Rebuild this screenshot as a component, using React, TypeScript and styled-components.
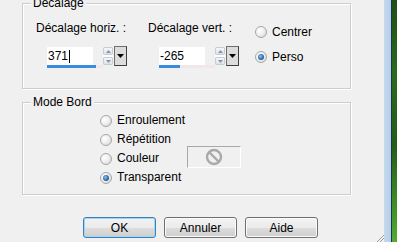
import React from "react";
import styled, { createGlobalStyle } from "styled-components";

const GlobalStyle = createGlobalStyle`
  html, body {
    margin: 0;
    padding: 0;
    background: #f0f0f0;
  }
  body {
    font-family: "Liberation Sans", Arial, sans-serif;
    font-size: 12px;
    color: #000;
  }
`;

const Screen = styled.div`
  display: flex;
  width: 397px;
  height: 242px;
  overflow: hidden;
`;

const Dialog = styled.div`
  position: relative;
  width: 384px;
  flex: none;
  display: flex;
  flex-direction: column;
  padding: 3px 33px 0 22px;
  box-sizing: border-box;
  background: #f0f0f0;
`;

const FrameEdge = styled.div`
  width: 7px;
  flex: none;
  background: linear-gradient(90deg, #c6daee, #b4cde8);
`;

const FrameLine = styled.div`
  width: 1px;
  flex: none;
  background: #1b3550;
`;

const Backdrop = styled.div`
  flex: 1;
  background: linear-gradient(180deg, #1f4f17 0%, #2b6a1d 30%, #265c18 60%, #3f8f25 85%, #55ab33 100%);
`;

const Group = styled.div<{ $h: number }>`
  position: relative;
  height: ${(p) => p.$h}px;
  box-sizing: border-box;
  border: 1px solid #cdcdcd;
  box-shadow: inset 1px 1px 0 #ffffff, 1px 1px 0 #ffffff;
`;

const Legend = styled.span`
  position: absolute;
  top: -8px;
  left: 8px;
  padding: 0 2px;
  line-height: 14px;
  background: #f0f0f0;
`;

const OffsetRow = styled.div`
  display: flex;
  padding: 17px 0 0 13px;
`;

const Field = styled.div<{ $w: number }>`
  width: ${(p) => p.$w}px;
  display: flex;
  flex-direction: column;
`;

const Label = styled.div`
  line-height: 14px;
  white-space: nowrap;
`;

const Spinner = styled.div`
  display: flex;
  align-items: flex-start;
  margin: 11px 0 0 11px;
`;

const EditColumn = styled.div`
  display: flex;
  flex-direction: column;
`;

const Edit = styled.div`
  width: 46px;
  height: 18px;
  margin-top: 1px;
  box-sizing: border-box;
  background: #fff;
  padding-left: 1px;
  line-height: 18px;
  display: flex;
  align-items: center;
`;

const Caret = styled.span`
  width: 1px;
  height: 13px;
  margin-left: 1px;
  background: #000;
`;

const Track = styled.div`
  width: 56px;
  height: 3px;
  background: #f3e6e6;
`;

const Fill = styled.div`
  height: 100%;
  background: #3b8ae0;
`;

const SpinButtons = styled.div`
  width: 10px;
  height: 18px;
  margin-top: 1px;
  display: flex;
  flex-direction: column;
  justify-content: space-between;
  background: #fff;
`;

const SpinHalf = styled.div`
  height: 8px;
  display: flex;
  align-items: center;
  justify-content: center;
  background: linear-gradient(180deg, #f4f6fa, #dde2ea);
  border: 1px solid #c8ccd6;
  box-sizing: border-box;
  border-radius: 1px;
`;

const Drop = styled.div`
  width: 13px;
  height: 20px;
  margin-left: 1px;
  box-sizing: border-box;
  border: 1px solid #6f6f6f;
  border-right-color: #3f3f3f;
  border-bottom-color: #3f3f3f;
  background: #dcdcdc;
  display: flex;
  align-items: center;
  justify-content: center;
`;

const RadioColumn = styled.div`
  display: flex;
  flex-direction: column;
  gap: 11px;
  padding-top: 4px;
`;

const RadioRow = styled.label`
  display: flex;
  align-items: center;
  gap: 5px;
  height: 14px;
  line-height: 14px;
  white-space: nowrap;
`;

const RadioDot = styled.span<{ $on?: boolean }>`
  position: relative;
  width: 12px;
  height: 12px;
  flex: none;
  box-sizing: border-box;
  border-radius: 50%;
  border: 1px solid #a7a7a7;
  background: radial-gradient(circle at 35% 35%, #ffffff 0%, #f0f0f0 45%, #cfcfcf 100%);

  &::after {
    content: "";
    display: ${(p) => (p.$on ? "block" : "none")};
    position: absolute;
    left: 2px;
    top: 2px;
    width: 6px;
    height: 6px;
    border-radius: 50%;
    background: radial-gradient(circle at 40% 40%, #8ec3f0 0%, #2c6fae 55%, #143f6a 100%);
  }
`;

const ModeRow = styled.div`
  display: flex;
  padding: 8px 0 0 77px;
`;

const ModeList = styled.div`
  width: 87px;
  display: flex;
  flex-direction: column;
`;

const ModeItem = styled(RadioRow)`
  height: 19px;
  line-height: 19px;
`;

const ColorWell = styled.div`
  width: 54px;
  height: 22px;
  margin-top: 35px;
  box-sizing: border-box;
  border: 1px solid #a8a8a8;
  border-right-color: #ffffff;
  border-bottom-color: #ffffff;
  display: flex;
  align-items: center;
  justify-content: center;
`;

const Buttons = styled.div`
  display: flex;
  gap: 8px;
  margin: 22px 0 0 61px;
`;

const Button = styled.button<{ $focus?: boolean }>`
  width: 73px;
  height: 21px;
  padding: 0;
  font-family: "Liberation Sans", Arial, sans-serif;
  font-size: 12px;
  color: #000;
  border-radius: 3px;
  border: 1px solid ${(p) => (p.$focus ? "#3d7fb6" : "#707070")};
  background: linear-gradient(180deg, #f3f3f3 0%, #ebebeb 50%, #dddddd 51%, #cfcfcf 100%);
  box-shadow: ${(p) => (p.$focus ? "inset 0 0 0 1px #9ad8f4" : "inset 0 0 0 1px #fbfbfb")};
`;

const Grip = styled.svg`
  position: absolute;
  right: 0;
  bottom: 0;
`;

const Arrow = ({ up, color }: { up?: boolean; color: string }) => (
  <svg width="5" height="3" viewBox="0 0 5 3">
    <path d={up ? "M0 3 L2.5 0 L5 3 Z" : "M0 0 L5 0 L2.5 3 Z"} fill={color} />
  </svg>
);

const SpinField = ({ value, fill, caret }: { value: string; fill: number; caret?: boolean }) => (
  <Spinner>
    <EditColumn>
      <Edit>
        {value}
        {caret && <Caret />}
      </Edit>
      <Track>
        <Fill style={{ width: `${fill}%` }} />
      </Track>
    </EditColumn>
    <SpinButtons>
      <SpinHalf>
        <Arrow up color="#8a93a6" />
      </SpinHalf>
      <SpinHalf>
        <Arrow color="#8a93a6" />
      </SpinHalf>
    </SpinButtons>
    <Drop>
      <svg width="7" height="4" viewBox="0 0 7 4">
        <path d="M0 0 L7 0 L3.5 4 Z" fill="#000" />
      </svg>
    </Drop>
  </Spinner>
);

const App = () => {
  return (
    <>
      <GlobalStyle />
      <Screen>
        <Dialog>
          <Group $h={86}>
            <Legend>Décalage</Legend>
            <OffsetRow>
              <Field $w={112}>
                <Label>Décalage horiz. :</Label>
                <SpinField value="371" fill={88} caret />
              </Field>
              <Field $w={107}>
                <Label>Décalage vert. :</Label>
                <SpinField value="-265" fill={38} />
              </Field>
              <RadioColumn>
                <RadioRow>
                  <RadioDot />
                  Centrer
                </RadioRow>
                <RadioRow>
                  <RadioDot $on />
                  Perso
                </RadioRow>
              </RadioColumn>
            </OffsetRow>
          </Group>

          <div style={{ height: 13 }} />

          <Group $h={93}>
            <Legend>Mode Bord</Legend>
            <ModeRow>
              <ModeList>
                <ModeItem>
                  <RadioDot />
                  Enroulement
                </ModeItem>
                <ModeItem>
                  <RadioDot />
                  Répétition
                </ModeItem>
                <ModeItem>
                  <RadioDot />
                  Couleur
                </ModeItem>
                <ModeItem>
                  <RadioDot $on />
                  Transparent
                </ModeItem>
              </ModeList>
              <ColorWell>
                <svg width="18" height="18" viewBox="0 0 18 18">
                  <circle cx="9" cy="9" r="7" fill="none" stroke="#a9a9a9" strokeWidth="2.4" />
                  <line x1="4" y1="4" x2="14" y2="14" stroke="#a9a9a9" strokeWidth="2.4" />
                </svg>
              </ColorWell>
            </ModeRow>
          </Group>

          <Buttons>
            <Button $focus>OK</Button>
            <Button>Annuler</Button>
            <Button>Aide</Button>
          </Buttons>

          <Grip width="8" height="8" viewBox="0 0 8 8">
            <line x1="8" y1="1" x2="1" y2="8" stroke="#a0a0a0" strokeWidth="1" />
            <line x1="8" y1="4" x2="4" y2="8" stroke="#a0a0a0" strokeWidth="1" />
          </Grip>
        </Dialog>
        <FrameEdge />
        <FrameLine />
        <Backdrop />
      </Screen>
    </>
  );
};

export default App;
